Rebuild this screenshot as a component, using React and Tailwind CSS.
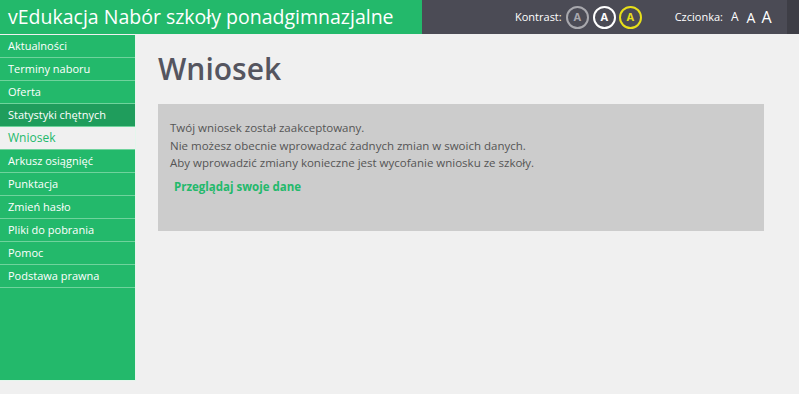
import React from "react";

const items = [
  "Aktualności",
  "Terminy naboru",
  "Oferta",
  "Statystyki chętnych",
  "Wniosek",
  "Arkusz osiągnięć",
  "Punktacja",
  "Zmień hasło",
  "Pliki do pobrania",
  "Pomoc",
  "Podstawa prawna",
];

export default function App() {
  return (
    <div
      className="w-[799px] h-[394px] bg-[#f0f0f0] overflow-hidden flex flex-col"
      style={{ fontFamily: '"Open Sans", "Noto Sans", sans-serif' }}
    >
      <div className="flex h-[34px] shrink-0">
        <div className="w-[422px] bg-[#23b96b] text-white text-[19.5px] leading-[34px] pl-[8px]">
          vEdukacja Nabór szkoły ponadgimnazjalne
        </div>
        <div className="flex-1 bg-[#4b4b55] flex items-center text-white text-[11px]">
          <span className="ml-[93px] mr-[4px]">Kontrast:</span>
          <span className="w-[23px] h-[23px] rounded-full border-[2.5px] border-[#a8a8ad] text-[#a8a8ad] flex items-center justify-center text-[11px] font-bold">A</span>
          <span className="ml-[4px] w-[23px] h-[23px] rounded-full border-[2.5px] border-white text-white flex items-center justify-center text-[11px] font-bold">A</span>
          <span className="ml-[3px] w-[23px] h-[23px] rounded-full border-[2.5px] border-[#e8e01a] text-[#e8e01a] flex items-center justify-center text-[11px] font-bold">A</span>
          <span className="ml-[33px]">Czcionka:</span>
          <span className="ml-[8px] text-[12px]">A</span>
          <span className="ml-[8px] text-[14px]">A</span>
          <span className="ml-[6px] text-[16px] leading-none">A</span>
        </div>
        <div className="w-[12px] bg-[#3e3e46]" />
      </div>
      <div className="flex flex-1 pt-[1px]">
        <div className="w-[136px] h-[346px] bg-[#23b96b] border-r border-b border-[#e4f6ec] flex flex-col">
          {items.map((it) => {
            const active = it === "Wniosek";
            const dark = it === "Statystyki chętnych";
            return (
              <div
                key={it}
                className={
                  "h-[23px] shrink-0 border-b border-[#6fd39c] pl-[8px] text-[11px] leading-[22px] " +
                  (active
                    ? "bg-[#f0f0f0] text-[#23b96b] text-[12px]"
                    : dark
                    ? "bg-[#1f9d5c] text-white"
                    : "text-white")
                }
              >
                {it}
              </div>
            );
          })}
        </div>
        <div className="flex-1 pl-[22px] pr-[35px]">
          <h1 className="text-[30px] font-semibold text-[#55555f] leading-[40px] mt-[14px]">Wniosek</h1>
          <div className="mt-[15px] h-[127px] bg-[#cccccc] pl-[12px] pt-[15px] text-[11.5px] text-[#555555] leading-[17.5px]">
            <div>Twój wniosek został zaakceptowany.</div>
            <div>Nie możesz obecnie wprowadzać żadnych zmian w swoich danych.</div>
            <div>Aby wprowadzić zmiany konieczne jest wycofanie wniosku ze szkoły.</div>
            <div className="mt-[6px] pl-[4px] font-bold text-[11.5px] text-[#23b96b]">Przeglądaj swoje dane</div>
          </div>
        </div>
      </div>
    </div>
  );
}
